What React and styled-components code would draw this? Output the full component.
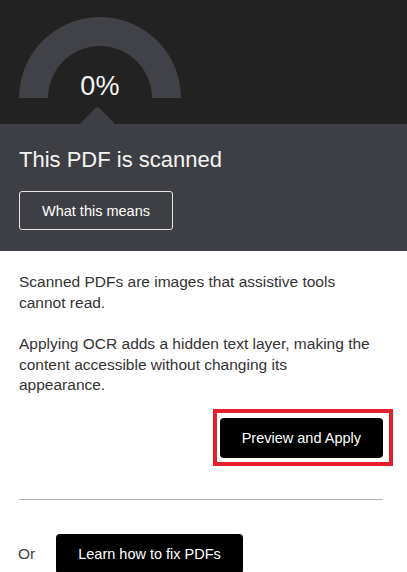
import React from "react";
import styled, { createGlobalStyle } from "styled-components";

const Global = createGlobalStyle`
  html, body { margin: 0; padding: 0; background: #ffffff; }
  body { font-family: "Liberation Sans", Arial, Helvetica, sans-serif; }
  * { box-sizing: border-box; }
`;

const Page = styled.div`
  width: 407px;
  height: 572px;
  overflow: hidden;
  display: flex;
  flex-direction: column;
  background: #fff;
`;

const Hero = styled.section`
  background: #222222;
  height: 124px;
  padding: 17px 0 0 19px;
  display: flex;
  flex-direction: column;
`;

const Gauge = styled.div`
  position: relative;
  width: 162px;
  height: 81px;
  svg { display: block; }
`;

const GaugeValue = styled.span`
  position: absolute;
  left: 0;
  right: 0;
  bottom: -2px;
  text-align: center;
  color: #f2f2f2;
  font-size: 27px;
  font-weight: 300;
  line-height: 1;
  letter-spacing: 0.2px;
`;

const Pointer = styled.div`
  width: 35px;
  height: 17px;
  margin: 9px 0 0 61px;
  background: #3e3f44;
  clip-path: polygon(0 100%, 44% 6%, 50% 0, 56% 6%, 100% 100%);
`;

const Panel = styled.section`
  background: #3e3f44;
  padding: 25px 19px 21px;
  display: flex;
  flex-direction: column;
  align-items: flex-start;
  gap: 20px;
`;

const Heading = styled.h1`
  margin: 0;
  color: #f4f4f4;
  font-size: 22px;
  font-weight: 400;
  line-height: 1;
`;

const Button = styled.button`
  height: ${(p) => (p.$outline ? "39px" : "40px")};
  padding: 0 22px;
  border-radius: ${(p) => (p.$outline ? "3px" : "4px")};
  border: ${(p) => (p.$outline ? "1px solid #e6e6e6" : "none")};
  background: ${(p) => (p.$outline ? "transparent" : "#000000")};
  color: #ffffff;
  font-family: "Liberation Sans", Arial, Helvetica, sans-serif;
  font-size: 14.5px;
  font-weight: 400;
  white-space: nowrap;
  cursor: pointer;
`;

const Body = styled.section`
  padding: 21px 24px 0 19px;
  display: flex;
  flex-direction: column;
`;

const Para = styled.p`
  margin: 0 0 21px;
  width: 355px;
  color: #333333;
  font-size: 15.5px;
  line-height: 20.6px;
  &:last-of-type { margin-bottom: 22px; }
`;

const ActionRow = styled.div`
  display: flex;
  justify-content: flex-end;
`;

const Highlight = styled.div`
  position: relative;
  display: flex;
`;

const HighlightFrame = styled.span`
  position: absolute;
  top: -9px;
  left: -7px;
  right: -10px;
  bottom: -8px;
  border: 4px solid #e3202b;
  pointer-events: none;
`;

const Divider = styled.hr`
  margin: 41px 0 0;
  border: none;
  height: 1px;
  background: #b4b4b4;
`;

const OrRow = styled.div`
  margin-top: 34px;
  display: flex;
  align-items: center;
  gap: 21px;
`;

const OrLabel = styled.span`
  color: #444444;
  font-size: 15.5px;
  margin-left: -1px;
`;

export default function App() {
  return (
    <Page>
      <Global />
      <Hero>
        <Gauge>
          <svg width="162" height="81" viewBox="0 0 162 81" aria-hidden="true">
            <path
              d="M0 81 A81 81 0 0 1 162 81 L133 81 A52 52 0 0 0 29 81 Z"
              fill="#414247"
            />
          </svg>
          <GaugeValue>0%</GaugeValue>
        </Gauge>
        <Pointer />
      </Hero>
      <Panel>
        <Heading>This PDF is scanned</Heading>
        <Button $outline>What this means</Button>
      </Panel>
      <Body>
        <Para>Scanned PDFs are images that assistive tools cannot read.</Para>
        <Para>
          Applying OCR adds a hidden text layer, making the content accessible
          without changing its appearance.
        </Para>
        <ActionRow>
          <Highlight>
            <Button>Preview and Apply</Button>
            <HighlightFrame />
          </Highlight>
        </ActionRow>
        <Divider />
        <OrRow>
          <OrLabel>Or</OrLabel>
          <Button>Learn how to fix PDFs</Button>
        </OrRow>
      </Body>
    </Page>
  );
}
